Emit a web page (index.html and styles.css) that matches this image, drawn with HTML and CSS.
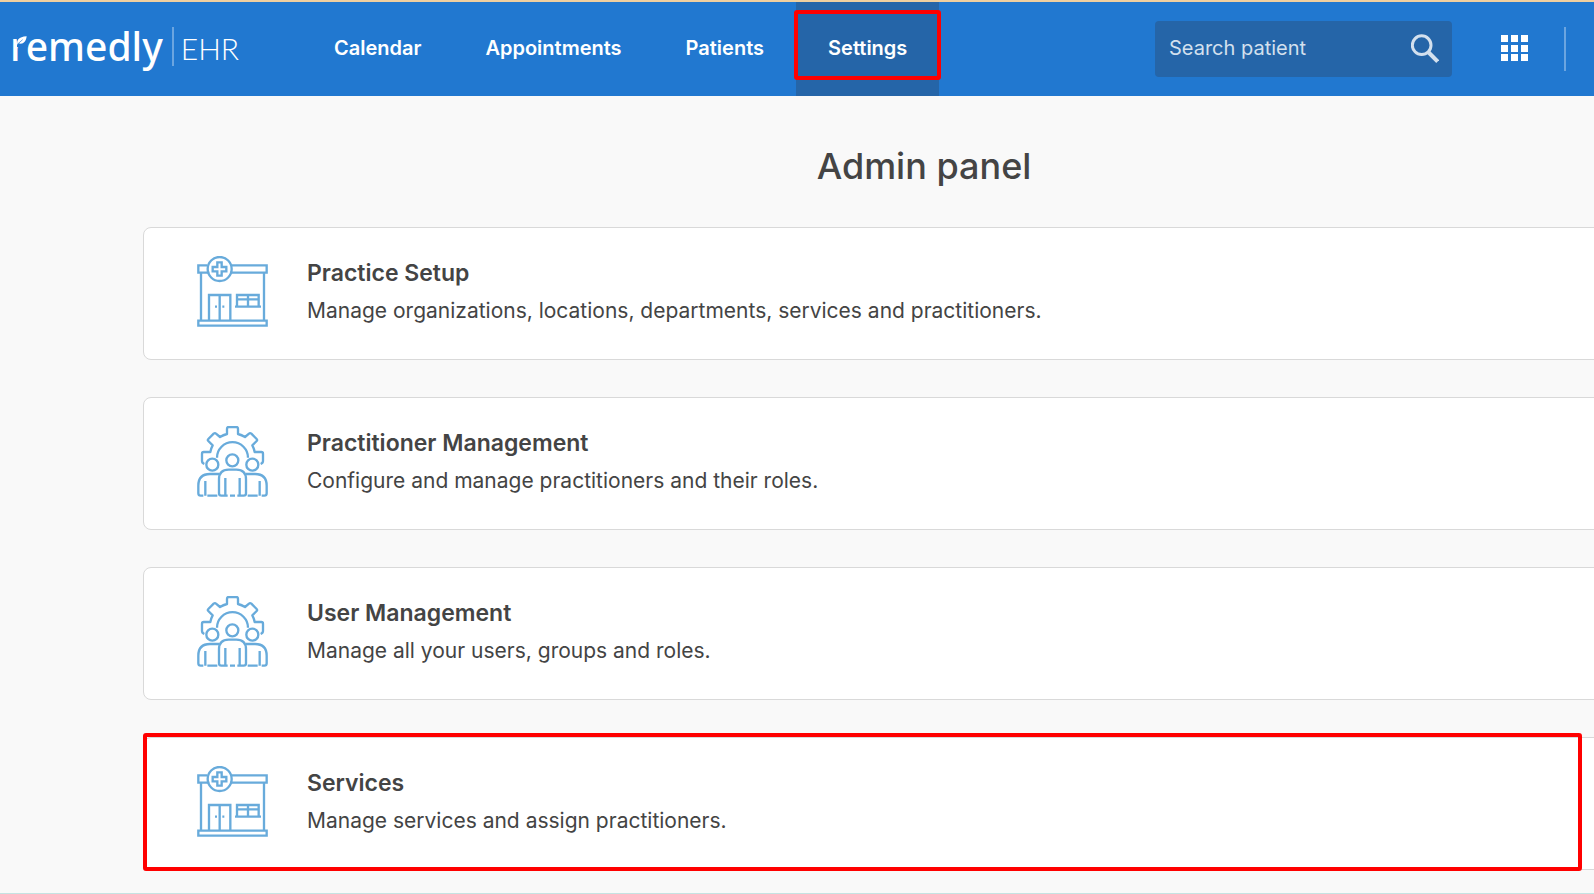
FILE: index.html
```html
<!DOCTYPE html>
<html lang="en">
<head>
<meta charset="utf-8">
<title>Remedly EHR – Admin panel</title>
<link rel="stylesheet" href="styles.css">
</head>
<body>
<svg class="sprite" aria-hidden="true">
  <symbol id="icon-practice" viewBox="51 48 216 216">
    <g fill="none" stroke="currentColor" stroke-width="7">
      <path d="M82 76H55V98H88M150 98H260V76H155M63 98V242M252 98V242M55 242H260V257H55Z"/>
      <circle cx="119" cy="87" r="36"/>
      <path d="M112 67H125V81H139V94H125V107H112V94H98V81H112Z"/>
      <path d="M87 242V165H151V242M119 165V242M105 200H111M127 200H133"/>
      <path d="M171 200V165H236V200M204 165V200M171 178H236M165 200H243"/>
    </g>
  </symbol>
  <symbol id="icon-team" viewBox="51 48 216 216">
    <g fill="none" stroke="currentColor" stroke-width="7" stroke-linejoin="round">
      <path d="M73 162Q66 159 66 153V131Q66 126 71 126H91Q93 115 98 106L85 93Q82 90 85 87L101 71Q105 68 108 71L120 81Q130 75 141 72V56Q141 51 146 51H169Q174 51 174 56V72Q185 75 195 81L207 71Q210 68 214 71L230 87Q233 90 230 93L217 106Q222 115 224 126H244Q249 126 249 131V153Q249 159 242 162"/>
      <path d="M111 143A46.500 46.500 0 0 1 204 143"/>
      <circle cx="97" cy="164" r="18"/>
      <circle cx="157" cy="151" r="18"/>
      <circle cx="217" cy="164" r="18"/>
      <path d="M143 257H124Q117 257 117 250V208Q117 179 146 179H169Q198 179 198 208V250Q198 257 191 257H172M150 257H165M136 204V257M179 204V257"/>
      <path d="M117 192H90Q55 192 55 227V250Q55 257 62 257H70M76 213V257M82 257H112M198 192H225Q260 192 260 227V250Q260 257 253 257H245M239 213V257M233 257H203"/>
    </g>
  </symbol>
</svg>

<header class="topbar">
  <a class="logo" href="#">
    <span class="logo-name">remedly
      <svg class="logo-leaf" viewBox="0 0 36 36" aria-hidden="true"><path class="leaf-gap" d="M3 0H36V36H3Z"/><path d="M4 29C2 16 7 6 32 4C30 22 20 29 8 25Z" fill="#fff"/><path d="M5 27L20 14" stroke="#2178d0" stroke-width="2"/></svg>
    </span>
    <span class="logo-product">EHR</span>
  </a>
  <nav class="nav">
    <a class="nav-link" href="#">Calendar</a>
    <a class="nav-link" href="#">Appointments</a>
    <a class="nav-link" href="#">Patients</a>
    <a class="nav-link nav-link-active" href="#" aria-current="page">Settings</a>
  </nav>
  <form class="search" role="search">
    <input class="search-input" type="search" placeholder="Search patient" aria-label="Search patient">
    <button class="search-button" type="button" aria-label="Search">
      <svg viewBox="0 0 84 86" width="28" height="29" aria-hidden="true"><circle cx="32" cy="33" r="28" fill="none" stroke="currentColor" stroke-width="9"/><path d="M53 55L80 82" stroke="currentColor" stroke-width="12"/></svg>
    </button>
  </form>
  <button class="apps-button" type="button" aria-label="Apps">
    <svg viewBox="0 0 27 26" width="27" height="26" fill="#fff" aria-hidden="true"><path d="M0 0H7V7H0ZM10 0H17V7H10ZM20 0H27V7H20ZM0 10H7V17H0ZM10 10H17V17H10ZM20 10H27V17H20ZM0 19H7V26H0ZM10 19H17V26H10ZM20 19H27V26H20Z"/></svg>
  </button>
</header>

<main class="panel">
  <h1 class="panel-title">Admin panel</h1>
  <div class="cards">
    <a class="card" href="#">
      <svg class="card-icon" aria-hidden="true"><use href="#icon-practice"/></svg>
      <span class="card-text"><strong class="card-title">Practice Setup</strong><span class="card-note">Manage organizations, locations, departments, services and practitioners.</span></span>
    </a>
    <a class="card" href="#">
      <svg class="card-icon" aria-hidden="true"><use href="#icon-team"/></svg>
      <span class="card-text"><strong class="card-title">Practitioner Management</strong><span class="card-note">Configure and manage practitioners and their roles.</span></span>
    </a>
    <a class="card" href="#">
      <svg class="card-icon" aria-hidden="true"><use href="#icon-team"/></svg>
      <span class="card-text"><strong class="card-title">User Management</strong><span class="card-note">Manage all your users, groups and roles.</span></span>
    </a>
    <a class="card card-marked" href="#">
      <svg class="card-icon" aria-hidden="true"><use href="#icon-practice"/></svg>
      <span class="card-text"><strong class="card-title">Services</strong><span class="card-note">Manage services and assign practitioners.</span></span>
    </a>
  </div>
</main>
<footer class="page-end"></footer>
</body>
</html>
```
FILE: styles.css
```css
* { box-sizing: border-box; }

body {
  margin: 0;
  overflow-x: hidden;
  background: #f9f9f9;
  color: #444;
  font-family: Inter, "Open Sans", sans-serif;
}

a { color: inherit; text-decoration: none; }

button {
  padding: 0;
  border: 0;
  background: none;
  color: inherit;
  cursor: pointer;
}

svg { display: block; }

.sprite { position: absolute; width: 0; height: 0; }

/* Top bar */
.topbar {
  display: flex;
  align-items: center;
  height: 96px;
  padding: 0 28px 0 10px;
  border-top: 2px solid #efcf9f;
  background: #2178d0;
  color: #fff;
}

.logo {
  display: flex;
  align-items: center;
  flex: none;
  width: 292px;
  padding-bottom: 6px;
}

.logo-name {
  position: relative;
  font: 500 39px/48px "Noto Sans", sans-serif;
}

.logo-leaf {
  position: absolute;
  left: 6px;
  top: 13px;
  width: 12px;
  height: 12px;
}

.leaf-gap { fill: #2178d0; }

.logo-product {
  margin-left: 9px;
  padding: 3px 0 0 7px;
  border-left: 2px solid #6ba5e0;
  font: 300 30px/36px Lato, sans-serif;
}

.nav {
  display: flex;
  align-self: stretch;
}

.nav-link {
  position: relative;
  display: flex;
  align-items: center;
  padding: 0 32px 2px;
  font-size: 20px;
  font-weight: 600;
}

.nav-link-active { background: #2565a8; }

.nav-link-active::after {
  content: "";
  position: absolute;
  inset: 8px -2px 16px;
  border: 4px solid #f00;
  border-radius: 3px;
}

.search {
  display: flex;
  align-items: center;
  width: 297px;
  height: 56px;
  margin-left: auto;
  padding: 0 13px 2px 14px;
  border-radius: 4px;
  background: #2565a8;
  color: #d3e0ee;
}

.search-input {
  flex: 1;
  min-width: 0;
  padding: 0;
  border: 0;
  outline: 0;
  background: none;
  color: inherit;
  font: 400 20px/28px Inter, sans-serif;
}

.search-input::placeholder { color: inherit; opacity: 1; }

.apps-button {
  display: flex;
  align-items: center;
  height: 44px;
  margin-left: 49px;
  padding: 0 36px 2px 0;
  border-right: 2px solid #6ba5e0;
}

/* Admin panel */
.panel {
  margin: 0 -111px 0 143px;
  padding-top: 46px;
}

.panel-title {
  margin: 0 0 37px;
  font-size: 36px;
  font-weight: 500;
  line-height: 48px;
  text-align: center;
}

.cards {
  display: grid;
  gap: 37px;
}

.card {
  position: relative;
  display: flex;
  gap: 38px;
  padding: 28px 53px 31px;
  border: 1px solid #d9d9d9;
  border-radius: 8px;
  background: #fff;
}

.card-marked::after {
  content: "";
  position: absolute;
  inset: -5px 122px -2px -1px;
  border: 4px solid #f00;
  border-radius: 3px;
}

.card-icon {
  flex: none;
  width: 72px;
  height: 72px;
  color: #68abdb;
}

.card-text {
  display: flex;
  flex-direction: column;
  gap: 6px;
  padding-top: 1px;
}

.card-title {
  font-size: 23px;
  font-weight: 600;
  line-height: 32px;
}

.card-note {
  font-size: 21px;
  line-height: 32px;
}

.page-end {
  margin-top: 23px;
  border-top: 1px solid #c5e3e2;
}
```
